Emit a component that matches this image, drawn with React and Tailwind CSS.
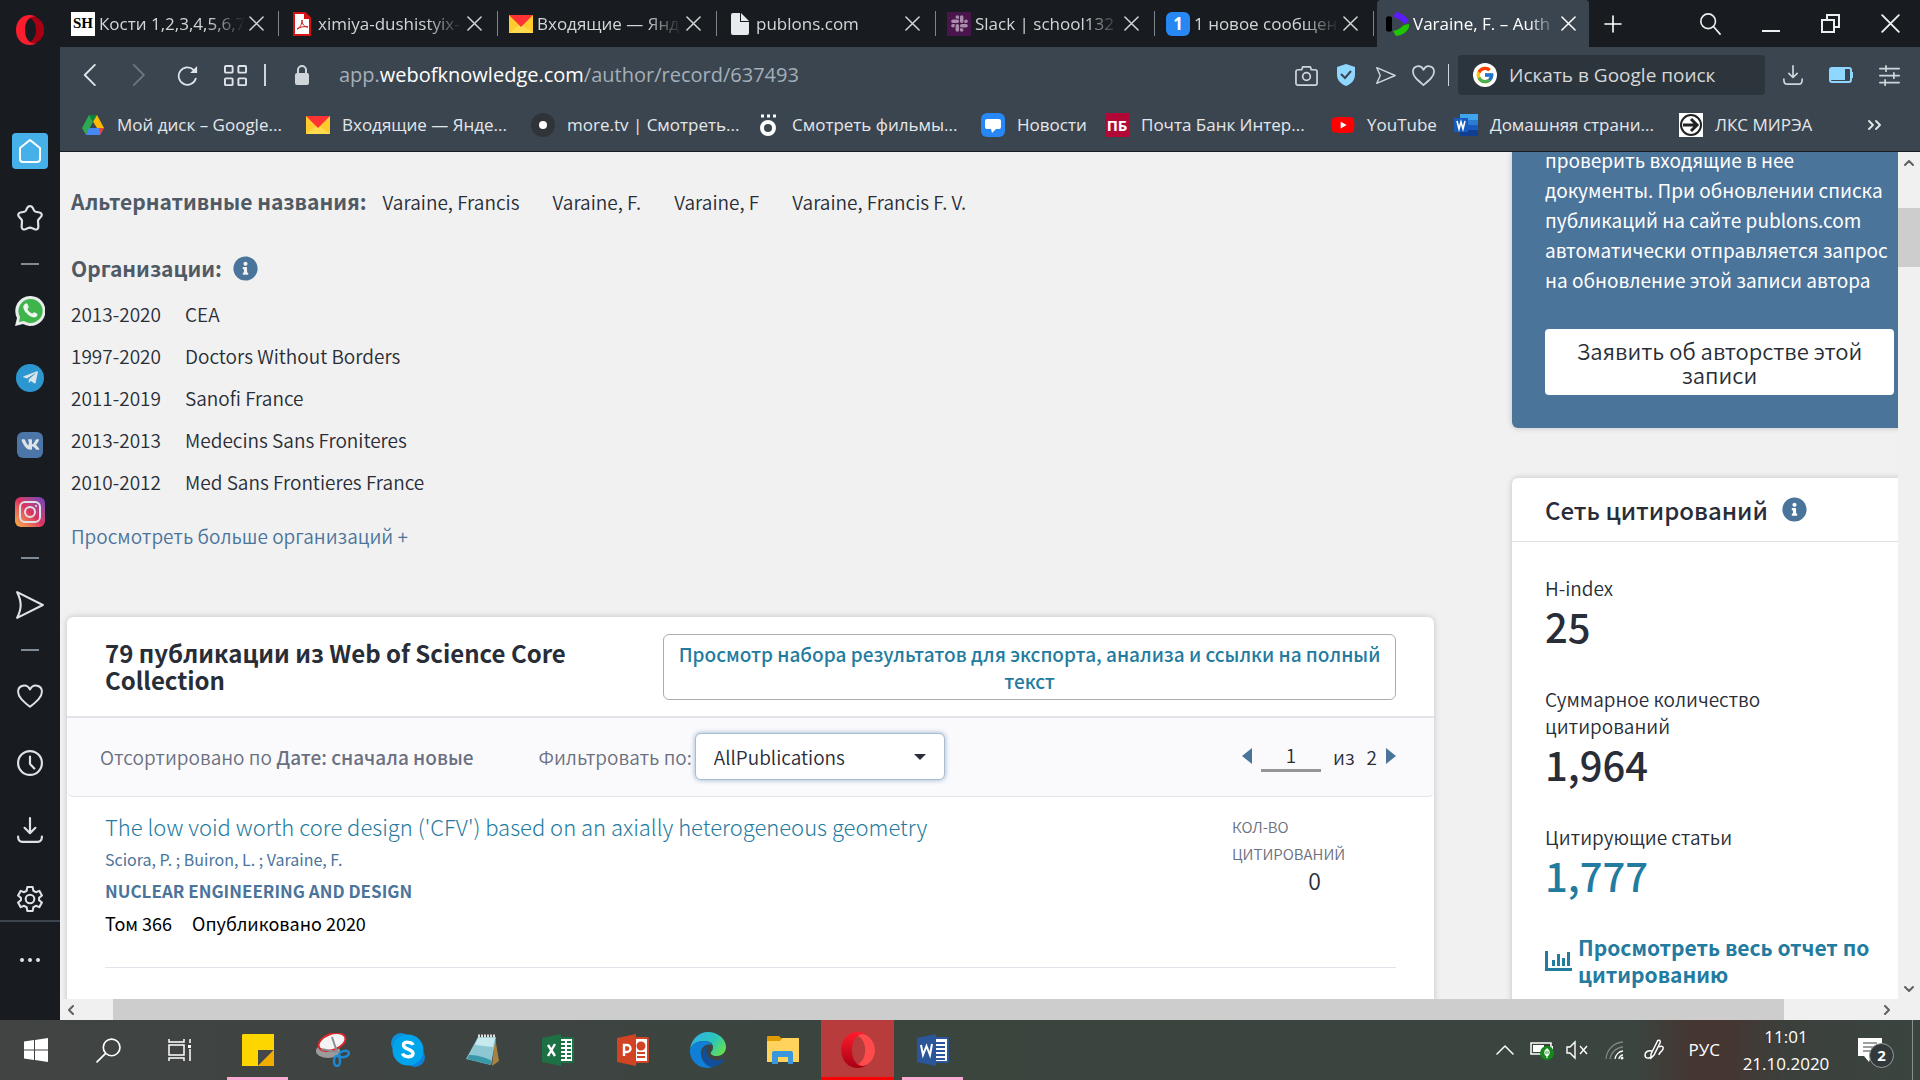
import {
  FaInfoCircle,
  FaSlack,
  FaTelegramPlane,
  FaVk,
  FaYoutube,
} from "react-icons/fa";
import { FcGoogle } from "react-icons/fc";

/* ---------- small drawings ---------- */

function Line({ size = 24, w = 2, color = "currentColor", vb = 24, children }) {
  return (
    <svg
      width={size}
      height={size}
      viewBox={`0 0 ${vb} ${vb}`}
      fill="none"
      stroke={color}
      strokeWidth={w}
      strokeLinecap="round"
      strokeLinejoin="round"
      className="shrink-0"
    >
      {children}
    </svg>
  );
}

function OperaLogo({ size, bright }) {
  return (
    <svg width={size} height={size} viewBox="0 0 30 30" className="shrink-0">
      <defs>
        <linearGradient id={bright ? "opA" : "opB"} x1="0" y1="0" x2="0" y2="1">
          <stop offset="0" stopColor="#ff1b2d" />
          <stop offset="1" stopColor={bright ? "#a70014" : "#fa1e2e"} />
        </linearGradient>
      </defs>
      <path
        fillRule="evenodd"
        fill={bright ? "#ff4b4b" : "#a70014"}
        d="M15 1c8 0 14 6 14 14s-6 14-14 14c-2 0-4-1-5-2 6 2 11-4 11-12S16 1 10 3c1-1 3-2 5-2z"
      />
      <path
        fillRule="evenodd"
        fill={`url(#${bright ? "opA" : "opB"})`}
        d="M15 0C7 0 1 6 1 15s6 15 14 15c3 0 5-1 7-2-7 2-12-4-12-13S15 0 22 2c-2-1-4-2-7-2z"
      />
      <path
        fill={bright ? "#ff4b4b" : "#a70014"}
        d="M17 2c7 0 12 6 12 13s-5 13-12 13c3-1 5-6 5-13S20 3 17 2z"
      />
    </svg>
  );
}

function EnvelopeIcon() {
  return (
    <svg width="24" height="18" viewBox="0 0 24 18" className="shrink-0">
      <path d="M0 0h24v18H0z" fill="#ffcb2d" />
      <path d="M0 18l12-9 12 9z" fill="#ffdb4d" />
      <path d="M0 0h24L12 12z" fill="#f33" />
    </svg>
  );
}

function ShIcon() {
  return (
    <span className="flex h-6 w-6 shrink-0 items-center justify-center bg-white font-['Liberation_Serif',serif] text-[15px] font-bold text-black">
      SH
    </span>
  );
}

function PdfIcon() {
  return (
    <svg width="18" height="24" viewBox="0 0 18 24" className="shrink-0">
      <path d="M1 1h11l5 5v17H1z" fill="#fff" stroke="#d41414" strokeWidth="2" />
      <path d="M11 0l7 7h-7z" fill="#d41414" />
      <path
        d="M4 17c3-1 5-5 5-9 0 4 2 7 6 7-4-1-8 0-11 2z"
        fill="none"
        stroke="#d41414"
      />
    </svg>
  );
}

function PageIcon() {
  return (
    <svg width="18" height="22" viewBox="0 0 18 22" className="shrink-0">
      <path d="M0 2a2 2 0 012-2h7v9h9v11a2 2 0 01-2 2H2a2 2 0 01-2-2z" fill="#e8ebee" />
      <path d="M10 0l8 8h-8z" fill="#e8ebee" />
    </svg>
  );
}

function ClarivateIcon() {
  return (
    <svg width="24" height="24" viewBox="0 0 24 24" className="shrink-0">
      <path d="M1 6c1-2 3-2 6-1v14c-3 1-5 1-6-1z" fill="#000" />
      <path d="M11 0c6 1 10 4 13 9l-5 3c-2-3-6-6-11-7z" fill="#5e1bff" />
      <path d="M11 24c7-1 11-4 13-9v-3l-5 1c-3 3-6 5-11 6z" fill="#1fc600" />
    </svg>
  );
}

function DriveIcon() {
  return (
    <svg width="22" height="20" viewBox="0 0 22 20" className="shrink-0">
      <path d="M7 0h8l7 13h-7z" fill="#ffba00" />
      <path d="M7 0l4 7-7 13-4-7z" fill="#2da94f" />
      <path d="M7 0h8l-4 7z" fill="#0b8043" />
      <path d="M7 13h15l-4 7H4z" fill="#4688f4" />
      <path d="M17 13h5l-4 7z" fill="#ea4335" />
    </svg>
  );
}

function WordTile() {
  return (
    <svg width="24" height="22" viewBox="0 0 24 22" className="shrink-0">
      <path d="M6 0h18v6H6z" fill="#41a5ee" />
      <path d="M6 6h18v5H6z" fill="#2b7cd3" />
      <path d="M6 11h18v5H6z" fill="#185abd" />
      <path d="M6 16h18v6H6z" fill="#103f91" />
      <path d="M0 4h14v14H0z" fill="#185abd" />
      <path d="M3 7l2 8 2-7 2 7 2-8" stroke="#fff" strokeWidth="1.6" fill="none" />
    </svg>
  );
}

/* ---------- left rail ---------- */

function RailItem({ label, children }) {
  return (
    <button aria-label={label} className="flex h-[67px] w-full items-center justify-center">
      {children}
    </button>
  );
}

function Dash({ className }) {
  return (
    <div className={`flex w-full items-center justify-center ${className}`}>
      <span className="h-[2px] w-[18px] bg-[#7f8b97]" />
    </div>
  );
}

function GearIcon() {
  return (
    <Line size={26} w={1.900}>
      <path d="M9.500 1h5l.6 3.400 2.300 1.300L20.600 4.500l2.400 4.200-2.600 2.200v2.200l2.600 2.200-2.400 4.200-3.200-1.200-2.300 1.300-.6 3.400h-5l-.6-3.400-2.300-1.300-3.200 1.200L1 15.300l2.600-2.200v-2.200L1 8.700l2.400-4.200 3.200 1.200 2.300-1.300z" />
      <circle cx="12" cy="12" r="4" />
    </Line>
  );
}

function Rail() {
  return (
    <aside className="flex w-[60px] shrink-0 flex-col items-center bg-[#181c20] text-[#dde3e6]">
      <button aria-label="Opera" className="mt-[15px] mb-[72px] h-[30px]">
        <OperaLogo size={30} />
      </button>
      <RailItem label="Home">
        <span className="flex h-9 w-9 items-center justify-center rounded bg-[#46b1e8] text-white">
          <Line>
            <path d="M12 1L2 9v11a3 3 0 003 3h14a3 3 0 003-3V9z" />
          </Line>
        </span>
      </RailItem>
      <RailItem label="Bookmarks">
        <Line size={26}>
          <path d="M12 1c1 0 2 .6 2.500 1.600l1.300 2.600c.3.600.8.900 1.400 1l3.600.7c2 .4 2.600 2.400 1.400 3.800l-2.300 2.700c-.4.500-.6 1-.5 1.700l.3 4.900c0 2-1.600 3-3.300 2.400l-3.400-1.300c-.6-.2-1.300-.2-2 0l-3.400 1.300c-1.700.6-3.300-.4-3.300-2.400l.3-4.900c.1-.7-.1-1.200-.5-1.700l-2.300-2.700C.6 9.300 1.200 7.300 3.200 6.900l3.600-.7c.6-.1 1.100-.4 1.400-1l1.300-2.600C10 1.600 11 1 12 1z" />
        </Line>
      </RailItem>
      <Dash className="h-[26px]" />
      <RailItem label="WhatsApp">
        <svg width="30" height="30" viewBox="0 0 30 30">
          <path d="M15 0a15 15 0 11-7 28L0 30l2-8A15 15 0 0115 0z" fill="#e8ecea" />
          <path d="M15 3a12 12 0 11-6 22l-5 1 1-5A12 12 0 0115 3z" fill="#3db54a" />
          <path
            d="M10 8c1-1 2-1 2.500 0l1.200 3c.2.700-1.400 1.800-1.200 2.300 1 2 2.500 3.400 4.500 4.300.6.200 1.500-1.700 2.200-1.400l3 1.500c.8.600-.2 2.900-1.400 3.400C16 23 7.500 15 8.300 10.600 8.500 9.400 9.300 8.600 10 8z"
            fill="#f2f4f3"
          />
        </svg>
      </RailItem>
      <RailItem label="Telegram">
        <span className="flex h-7 w-7 items-center justify-center rounded-full bg-[#2b96cf]">
          <FaTelegramPlane size={17} />
        </span>
      </RailItem>
      <RailItem label="VK">
        <span className="flex h-[26px] w-[26px] items-center justify-center rounded-md bg-[#4c75a8]">
          <FaVk size={19} />
        </span>
      </RailItem>
      <RailItem label="Instagram">
        <span className="flex h-[30px] w-[30px] items-center justify-center rounded-md bg-linear-to-tr from-[#f8b13c] via-[#dc3060] to-[#6a3bc0]">
          <Line size={24}>
            <rect x="2" y="2" width="20" height="20" rx="5" />
            <circle cx="12" cy="12" r="5" />
            <path d="M18 6h.01" />
          </Line>
        </span>
      </RailItem>
      <Dash className="h-[26px]" />
      <RailItem label="My Flow">
        <Line size={28} w={1.800}>
          <path d="M1 1l22 11L1 23c4-8 4-14 0-22z" />
        </Line>
      </RailItem>
      <Dash className="h-6" />
      <RailItem label="Personal news">
        <Line size={26} w={1.800}>
          <path d="M12 22C6 17 1 13 1 8c0-6 8-8 11-2 3-6 11-4 11 2 0 5-5 9-11 14z" />
        </Line>
      </RailItem>
      <RailItem label="History">
        <Line size={26}>
          <circle cx="12" cy="12" r="11" />
          <path d="M12 6v7l4 4" />
        </Line>
      </RailItem>
      <RailItem label="Downloads">
        <Line size={26}>
          <path d="M12 1v14M7 10l5 5 5-5M1 18c0 3 1 5 4 5h14c3 0 4-2 4-5" />
        </Line>
      </RailItem>
      <button aria-label="Settings" className="flex h-[57px] w-full items-end justify-center pb-2">
        <GearIcon />
      </button>
      <div className="flex w-full flex-1 flex-col items-center border-t-2 border-[#3c444d]">
        <button aria-label="More" className="flex h-[76px] items-center gap-1">
          <span className="h-1 w-1 rounded-full bg-[#dde3e6]" />
          <span className="h-1 w-1 rounded-full bg-[#dde3e6]" />
          <span className="h-1 w-1 rounded-full bg-[#dde3e6]" />
        </button>
      </div>
    </aside>
  );
}

/* ---------- browser chrome ---------- */

const tabs = [
  { icon: <ShIcon />, title: "Кости 1,2,3,4,5,6,7" },
  { icon: <PdfIcon />, title: "ximiya-dushistyix-" },
  { icon: <EnvelopeIcon />, title: "Входящие — Янд" },
  { icon: <PageIcon />, title: "publons.com" },
  {
    icon: (
      <span className="flex h-6 w-6 shrink-0 items-center justify-center bg-[#4a154b] text-[#a98bab]">
        <FaSlack size={19} />
      </span>
    ),
    title: "Slack | school132",
  },
  {
    icon: (
      <span className="flex h-6 w-6 shrink-0 items-center justify-center rounded-md bg-[#2787f5] text-[17px] font-bold text-white">
        1
      </span>
    ),
    title: "1 новое сообщен",
  },
];

function CloseX({ size = 15 }) {
  return (
    <Line size={size} vb={16} w={1.600}>
      <path d="M1 1l14 14M15 1L1 15" />
    </Line>
  );
}

function Tab({ icon, title }) {
  return (
    <div className="flex h-[47px] w-[219px] items-center text-[#d3d6d9]">
      <div className="flex min-w-0 flex-1 items-center gap-1 pl-[11px]">
        <span className="flex w-6 shrink-0 justify-center">{icon}</span>
        <span className="flex-1 whitespace-nowrap mask-r-from-75%">{title}</span>
        <button aria-label="Close tab" className="mr-[15px] shrink-0">
          <CloseX />
        </button>
      </div>
      <span className="h-[25px] w-px bg-[#7d868f]" />
    </div>
  );
}

function TabBar() {
  return (
    <div className="flex h-[47px] items-center bg-[#181c20] text-[17px]">
      {tabs.map((t) => (
        <Tab key={t.title} {...t} />
      ))}
      <div className="ml-[3px] flex h-[47px] w-[212px] items-center gap-1 rounded-t bg-[#3b4550] pl-2 text-white">
        <ClarivateIcon />
        <span className="flex-1 whitespace-nowrap mask-r-from-80%">Varaine, F. – Auth</span>
        <button aria-label="Close tab" className="mr-[13px] shrink-0">
          <CloseX />
        </button>
      </div>
      <button aria-label="New tab" className="ml-[15px] text-white">
        <Line size={18} vb={18} w={1.600}>
          <path d="M9 1v16M1 9h16" />
        </Line>
      </button>
      <div className="mr-5 ml-auto flex items-center gap-[41px] text-[#eceff1]">
        <button aria-label="Search tabs">
          <Line size={22} w={1.800}>
            <circle cx="10" cy="9" r="8" />
            <path d="M16 15l7 8" />
          </Line>
        </button>
        <button aria-label="Minimize" className="flex h-[17px] items-end">
          <span className="block h-[2px] w-[18px] bg-[#eceff1]" />
        </button>
        <button aria-label="Restore">
          <svg width="19" height="19" viewBox="0 0 19 19" fill="none" stroke="currentColor" strokeWidth="2">
            <path d="M1 6h12v12H1zM6 5V1h12v12h-4" />
          </svg>
        </button>
        <button aria-label="Close window">
          <CloseX size={19} />
        </button>
      </div>
    </div>
  );
}

function AddressBar() {
  return (
    <div className="flex h-[56px] items-center text-[#dfe4e8]">
      <button aria-label="Back" className="ml-[22px]">
        <Line size={22}>
          <path d="M14 1L3 12l11 11" />
        </Line>
      </button>
      <button aria-label="Forward" className="ml-[27px] text-[#6b7681]">
        <Line size={22}>
          <path d="M3 1l11 11L3 23" />
        </Line>
      </button>
      <button aria-label="Reload" className="ml-6">
        <Line size={21}>
          <path d="M21.500 15.500A10 10 0 1119 5.500" />
          <path d="M23 1v8h-8z" fill="currentColor" stroke="none" />
        </Line>
      </button>
      <button aria-label="Speed dial" className="ml-[26px]">
        <Line size={23}>
          <rect x="1" y="2" width="8" height="7" rx="1" />
          <rect x="15" y="2" width="8" height="7" rx="1" />
          <rect x="1" y="15" width="8" height="7" rx="1" />
          <rect x="15" y="15" width="8" height="7" rx="1" />
        </Line>
      </button>
      <span className="ml-[17px] h-[22px] w-[2px] bg-[#cfd5da]" />
      <svg width="14" height="20" viewBox="0 0 14 20" className="ml-[29px]">
        <path d="M3 9V5a4 4 0 018 0v4" fill="none" stroke="#cfd5d8" strokeWidth="2" />
        <rect y="8" width="14" height="12" rx="2" fill="#cfd5d8" />
      </svg>
      <span className="ml-[30px] text-[20px] text-[#a4afb9]">
        app.<span className="text-white">webofknowledge.com</span>/author/record/637493
      </span>
      <div className="ml-auto flex items-center text-[#cfd5d9]">
        <button aria-label="Snapshot">
          <Line size={23} w={1.800}>
            <path d="M8 3h8l1 3h4a2 2 0 012 2v12a2 2 0 01-2 2H3a2 2 0 01-2-2V8a2 2 0 012-2h4z" />
            <circle cx="12" cy="13" r="4" />
          </Line>
        </button>
        <button aria-label="Ad blocker" className="ml-[19px]">
          <svg width="18" height="22" viewBox="0 0 18 22">
            <path d="M9 0l9 3v8c0 5-4 9-9 11-5-2-9-6-9-11V3z" fill="#8fd7ff" />
            <path d="M4 10l4 4 6-7" fill="none" stroke="#3b4550" strokeWidth="2" />
          </svg>
        </button>
        <button aria-label="Send to My Flow" className="ml-5">
          <Line size={21} w={1.600}>
            <path d="M2 3l21 9L2 21l4-9z" />
          </Line>
        </button>
        <button aria-label="Add to bookmarks" className="ml-4">
          <Line size={23} w={1.800}>
            <path d="M12 22C6 17 1 13 1 8c0-6 8-8 11-2 3-6 11-4 11 2 0 5-5 9-11 14z" />
          </Line>
        </button>
        <span className="ml-[13px] h-[22px] w-px bg-[#cfd5da]" />
        <label className="ml-[9px] flex h-10 w-[307px] items-center gap-3 rounded-sm bg-[#2d353c] pl-[15px]">
          <span className="flex h-6 w-6 items-center justify-center rounded-full bg-white">
            <FcGoogle size={20} />
          </span>
          <input
            aria-label="Search"
            placeholder="Искать в Google поиск"
            className="w-[240px] bg-transparent text-[19px] outline-none placeholder:text-[#d5d8da]"
          />
        </label>
        <button aria-label="Downloads" className="ml-[18px]">
          <Line size={20}>
            <path d="M12 1v14M7 10l5 5 5-5M1 17c0 4 1 6 4 6h14c3 0 4-2 4-6" />
          </Line>
        </button>
        <button aria-label="Battery saver" className="ml-[26px]">
          <svg width="24" height="16" viewBox="0 0 24 16">
            <rect x="1" y="1" width="21" height="14" rx="2" fill="none" stroke="#8fd7ff" strokeWidth="2" />
            <path d="M2 2h14v11H2zM22 5h2v6h-2z" fill="#8fd7ff" />
          </svg>
        </button>
        <button aria-label="Easy setup" className="mr-5 ml-[26px]">
          <Line size={21}>
            <path d="M1 4h22M1 12h22M1 20h22M8 1v6M17 9v6M7 17v6" />
          </Line>
        </button>
      </div>
    </div>
  );
}

const bookmarks = [
  { w: "w-[225px]", icon: <DriveIcon />, title: "Мой диск – Google..." },
  { w: "w-[225px]", icon: <EnvelopeIcon />, title: "Входящие — Янде..." },
  {
    w: "w-[225px]",
    icon: (
      <span className="flex h-6 w-6 items-center justify-center rounded-full bg-[#303439]">
        <span className="h-2 w-2 rounded-full bg-white" />
      </span>
    ),
    title: "more.tv | Смотреть...",
  },
  {
    w: "w-[225px]",
    icon: (
      <svg width="18" height="24" viewBox="0 0 18 24">
        <circle cx="9" cy="15" r="6" fill="none" stroke="#fff" strokeWidth="4" />
        <path d="M2 3h3M8 3h3M14 3h3" stroke="#fff" strokeWidth="3" />
      </svg>
    ),
    title: "Смотреть фильмы...",
  },
  {
    w: "w-[124px]",
    icon: (
      <svg width="24" height="24" viewBox="0 0 24 24">
        <rect width="24" height="24" rx="6" fill="#2787f5" />
        <path d="M6 6h12a2 2 0 012 2v6a2 2 0 01-2 2h-3l-4 4-1-4H6a2 2 0 01-2-2V8a2 2 0 012-2z" fill="#fff" />
      </svg>
    ),
    title: "Новости",
  },
  {
    w: "w-[226px]",
    icon: (
      <span className="flex h-6 w-6 items-center justify-center bg-[#b20838] text-[15px] font-bold text-white">
        ПБ
      </span>
    ),
    title: "Почта Банк Интер...",
  },
  {
    w: "w-[123px]",
    icon: (
      <FaYoutube
        size={24}
        color="#f00"
        className="bg-[linear-gradient(white,white)] bg-[length:10px_8px] bg-center bg-no-repeat"
      />
    ),
    title: "YouTube",
  },
  { w: "w-[225px]", icon: <WordTile />, title: "Домашняя страни..." },
  {
    w: "w-[180px]",
    icon: (
      <svg width="24" height="24" viewBox="0 0 24 24">
        <path d="M0 0h24v24H0z" fill="#fff" />
        <circle cx="12" cy="12" r="10" fill="none" stroke="#222" strokeWidth="2" />
        <path d="M4 12h13M12 6l6 6-6 6" fill="none" stroke="#222" strokeWidth="3" />
      </svg>
    ),
    title: "ЛКС МИРЭА",
  },
];

function Bookmarks() {
  return (
    <div className="flex h-[49px] items-center border-b border-[#181c20] pb-1 pl-[21px] text-[17px] text-[#e4e7ea]">
      {bookmarks.map((b) => (
        <a key={b.title} href="#" className={`flex items-center gap-3 whitespace-nowrap ${b.w}`}>
          <span className="flex w-6 shrink-0 justify-center">{b.icon}</span>
          {b.title}
        </a>
      ))}
      <button aria-label="More bookmarks" className="mr-[38px] ml-auto">
        <Line size={14} vb={14} w={1.800}>
          <path d="M1 3l4 4-4 4M8 3l4 4-4 4" />
        </Line>
      </button>
    </div>
  );
}

/* ---------- page ---------- */

const names = ["Varaine, Francis", "Varaine, F.", "Varaine, F", "Varaine, Francis F. V."];

const organizations = [
  ["2013-2020", "CEA"],
  ["1997-2020", "Doctors Without Borders"],
  ["2011-2019", "Sanofi France"],
  ["2013-2013", "Medecins Sans Froniteres"],
  ["2010-2012", "Med Sans Frontieres France"],
];

function Profile() {
  return (
    <section className="px-1">
      <div className="flex h-[30px] items-center">
        <h2 className="mr-4 text-[21px] font-bold text-[#505a66]">Альтернативные названия:</h2>
        <ul className="flex gap-[33px]">
          {names.map((n) => (
            <li key={n}>{n}</li>
          ))}
        </ul>
      </div>
      <div className="mt-[37px] flex h-[30px] items-center gap-[11px]">
        <h2 className="text-[21px] font-bold text-[#505a66]">Организации:</h2>
        <button aria-label="Информация">
          <FaInfoCircle size={25} color="#4b749b" />
        </button>
      </div>
      <table className="mt-[9px]">
        <tbody>
          {organizations.map(([years, org]) => (
            <tr key={org} className="h-[42px]">
              <td className="w-[114px]">{years}</td>
              <td>{org}</td>
            </tr>
          ))}
        </tbody>
      </table>
      <a href="#" className="mt-5 block text-[#4b749b]">
        Просмотреть больше организаций +
      </a>
    </section>
  );
}

function Publications() {
  return (
    <section className="mt-[68px] rounded-md bg-white shadow-[0_0_6px_rgba(0,0,0,0.2)]">
      <div className="flex items-start justify-between border-b-2 border-[#e3e3ec] pt-[17px] pr-[38px] pb-4 pl-[38px]">
        <h1 className="mt-[5px] w-[500px] text-[24px] leading-[27px] font-bold">
          79 публикации из Web of Science Core Collection
        </h1>
        <button className="h-[66px] w-[733px] rounded-md border border-[#a9adb3] px-2 pb-px leading-[27px] font-medium text-[#247ba0]">
          Просмотр набора результатов для экспорта, анализа и ссылки на полный текст
        </button>
      </div>
      <div className="flex h-[79px] items-center rounded-b-md border-b border-[#e3e3ec] bg-[#fafafd] pr-[38px] pb-[2px] pl-[33px] text-[#6b7080]">
        <p>
          Отсортировано по <b className="font-medium">Дате: сначала новые</b>
        </p>
        <label htmlFor="filter" className="ml-[65px]">
          Фильтровать по:
        </label>
        <div className="relative ml-[3px]">
          <select
            id="filter"
            className="h-[47px] w-[250px] appearance-none rounded-md border border-[#a9bdd2] bg-white px-[18px] text-[#282d37] shadow-[0_0_4px_1px_#b4c6d9] outline-none"
          >
            <option>AllPublications</option>
          </select>
          <svg width="12" height="6" viewBox="0 0 12 6" className="pointer-events-none absolute top-[21px] right-[19px]">
            <path d="M0 0h12L6 6z" fill="#282d37" />
          </svg>
        </div>
        <div className="ml-auto flex items-center text-[#282d37]">
          <button aria-label="Предыдущая">
            <svg width="10" height="16" viewBox="0 0 10 16">
              <path d="M10 0v16L0 8z" fill="#4b749b" />
            </svg>
          </button>
          <input
            aria-label="Страница"
            defaultValue="1"
            className="ml-[9px] h-8 w-[60px] border-b-[3px] border-[#959595] text-center outline-none"
          />
          <span className="ml-3">из</span>
          <span className="ml-3">2</span>
          <button aria-label="Следующая" className="ml-[9px]">
            <svg width="10" height="16" viewBox="0 0 10 16">
              <path d="M0 0v16l10-8z" fill="#4b749b" />
            </svg>
          </button>
        </div>
      </div>
      <article className="mx-[38px] flex h-[171px] justify-between border-b border-[#e3e3ec] pt-[11px]">
        <div>
          <h3 className="text-[22px] leading-9 font-light">
            <a href="#" className="text-[#247ba0]">
              The low void worth core design ('CFV') based on an axially heterogeneous geometry
            </a>
          </h3>
          <p className="text-[16px] leading-[30px] font-normal text-[#4b749b]">Sciora, P. ; Buiron, L. ; Varaine, F.</p>
          <p className="text-[17px] leading-[34px] font-bold text-[#4b749b]">NUCLEAR ENGINEERING AND DESIGN</p>
          <p className="flex gap-5 text-[18px] leading-[30px] font-normal text-black">
            <span>Том 366</span>
            <span>Опубликовано 2020</span>
          </p>
        </div>
        <div className="mr-[51px] w-[113px] pt-[5px] text-[15px] leading-[27px] text-[#6b7080]">
          КОЛ-ВО ЦИТИРОВАНИЙ
          <p className="pr-6 text-right text-[23px] text-[#282d37]">0</p>
        </div>
      </article>
      <div className="h-[200px]" />
    </section>
  );
}

function Metric({ label, value, link }) {
  return (
    <div className="mb-[34px]">
      <p className="w-[250px] leading-[27px]">{label}</p>
      <p className="text-[40px] leading-[50px] font-medium">
        {link ? (
          <a href="#" className="text-[#247ba0]">
            {value}
          </a>
        ) : (
          value
        )}
      </p>
    </div>
  );
}

function SideColumn() {
  return (
    <div className="flex w-[386px] shrink-0 flex-col gap-[50px]">
      <section className="w-[416px] rounded-b-md bg-[#4b749b] pt-px pr-[34px] pb-[33px] pl-[33px] text-white shadow-[0_0_6px_rgba(0,0,0,0.2)]">
        <p className="-mt-2 leading-[30px] font-normal">
          проверить входящие в нее
          <br />
          документы. При обновлении списка
          <br />
          публикаций на сайте publons.com
          <br />
          автоматически отправляется запрос
          <br />
          на обновление этой записи автора
        </p>
        <button className="mt-[34px] h-[66px] w-full rounded bg-white px-6 text-[22px] leading-6 text-[#282d37]">
          Заявить об авторстве этой записи
        </button>
      </section>
      <section className="h-[700px] w-[416px] shrink-0 rounded-md bg-white shadow-[0_0_6px_rgba(0,0,0,0.2)]">
        <div className="flex h-16 items-center gap-[14px] border-b border-[#e0e0e4] pl-[33px]">
          <h2 className="text-[24px] font-medium">Сеть цитирований</h2>
          <button aria-label="Информация">
            <FaInfoCircle size={25} color="#4b749b" />
          </button>
        </div>
        <div className="pt-8 pl-[33px]">
          <Metric label="H-index" value="25" />
          <Metric label="Суммарное количество цитирований" value="1,964" />
          <Metric label="Цитирующие статьи" value="1,777" link />
          <a href="#" className="flex items-center gap-[6px] text-[21px] leading-[27px] font-bold text-[#247ba0]">
            <svg width="27" height="20" viewBox="0 0 27 20" fill="currentColor" className="shrink-0">
              <path d="M0 0h3v17h24v3H0zM7 9h3v6H7zM12 3h3v12h-3zM17 7h3v8h-3zM22 1h3v14h-3z" />
            </svg>
            <span className="w-[300px]">Просмотреть весь отчет по цитированию</span>
          </a>
        </div>
      </section>
    </div>
  );
}

function Chevron({ d }) {
  return (
    <Line size={10} vb={10} w={2} color="#606060">
      <path d={d} />
    </Line>
  );
}

function Page() {
  return (
    <div className="flex min-h-0 flex-1 flex-col bg-[#f0f0f0]">
      <div className="flex min-h-0 flex-1">
        <main className="flex min-w-0 flex-1 justify-between overflow-hidden bg-[#f1f1f1] font-['Noto_Sans_CJK_SC',sans-serif] text-[19px] leading-[27px] font-[350] text-[#282d37]">
          <div className="ml-[7px] w-[1367px] pt-[34px]">
            <Profile />
            <Publications />
          </div>
          <SideColumn />
        </main>
        <div className="flex w-[22px] shrink-0 flex-col items-center bg-[#f0f0f0]">
          <div className="flex h-[56px] items-start pt-[6px]">
            <Chevron d="M1 7l4-4 4 4" />
          </div>
          <div className="h-[59px] w-full bg-[#cdcdcd]" />
          <div className="mt-auto pb-[5px]">
            <Chevron d="M1 3l4 4 4-4" />
          </div>
        </div>
      </div>
      <div className="flex h-[21px] items-center">
        <div className="w-[53px] pl-[6px]">
          <Chevron d="M7 1L3 5l4 4" />
        </div>
        <div className="h-full flex-1 bg-[#cdcdcd]" />
        <div className="flex w-[136px] justify-end pr-7">
          <Chevron d="M3 1l4 4-4 4" />
        </div>
      </div>
    </div>
  );
}

/* ---------- taskbar ---------- */

function OfficeIcon({ color, kind }) {
  return (
    <svg width="32" height="32" viewBox="0 0 32 32">
      <rect x="15" y="4" width="16" height="24" rx="1" fill="#fff" stroke={color} strokeWidth="2" />
      {kind === "X" && (
        <path d="M19 8h4M25 8h4M19 12h4M25 12h4M19 16h4M25 16h4M19 20h4M25 20h4M19 24h4M25 24h4" stroke={color} strokeWidth="2" />
      )}
      {kind === "P" && (
        <g fill="none" stroke={color} strokeWidth="2">
          <circle cx="24" cy="12" r="3.500" fill={color} />
          <path d="M20 19h8M20 23h8" />
        </g>
      )}
      {kind === "W" && <path d="M19 9h9M19 13h9M19 17h9M19 21h9M19 25h9" stroke={color} strokeWidth="2" />}
      <path d="M0 4l19-4v32L0 28z" fill={color} />
      <g fill="none" stroke="#fff" strokeWidth="2.400">
        {kind === "X" && <path d="M6 11l7 11M13 10L6 22" />}
        {kind === "P" && <path d="M7 22V11h3a3 3 0 010 7H7" />}
        {kind === "W" && <path d="M4 11l2 10 3.500-9 3.500 9 2-11" strokeWidth="2" />}
      </g>
    </svg>
  );
}

const apps = [
  {
    label: "Sticky Notes",
    open: true,
    icon: (
      <svg width="32" height="32" viewBox="0 0 32 32">
        <path d="M1 0h31v32H0V1z" fill="#fdd600" />
        <path d="M16 16h16L16 32z" fill="#45484a" />
        <path d="M32 16v16H16z" fill="#f2ae00" />
      </svg>
    ),
  },
  {
    label: "Snipping Tool",
    icon: (
      <svg width="34" height="34" viewBox="0 0 34 34">
        <ellipse cx="12" cy="18" rx="12" ry="7" fill="#9b9b9b" />
        <ellipse cx="16" cy="9" rx="14" ry="8" transform="rotate(-20 16 9)" fill="#f4f4f4" stroke="#d8262c" strokeWidth="2" />
        <path d="M16 4l5 15M5 16l16 3" stroke="#8a8f94" strokeWidth="2" />
        <g fill="none" stroke="#1e88d2" strokeWidth="2.500">
          <ellipse cx="28" cy="21" rx="5" ry="3" transform="rotate(-15 28 21)" />
          <ellipse cx="21" cy="28" rx="3" ry="5" />
        </g>
      </svg>
    ),
  },
  {
    label: "Skype",
    icon: (
      <svg width="34" height="34" viewBox="0 0 34 34">
        <circle cx="10" cy="10" r="10" fill="#0b92dd" />
        <circle cx="24" cy="24" r="10" fill="#0a82da" />
        <circle cx="17" cy="17" r="15.500" fill="#00a5ec" />
        <path d="M22 12c-1-3-9-4-9.500 0-.5 4.500 9.500 3.500 9.500 8.500 0 4.500-9 4-10.500 0" fill="none" stroke="#fff" strokeWidth="3.500" />
      </svg>
    ),
  },
  {
    label: "Notepad",
    icon: (
      <svg width="34" height="32" viewBox="0 0 34 32">
        <path d="M29 3l4 24-7 5z" fill="#a8813f" />
        <path d="M12 3h18l-5 28L0 25z" fill="#8cc7d2" />
        <path d="M12 4h17l-2 9-18-2z" fill="#c8e9ee" />
        <path d="M1 25l24 6 1-4C17 22 9 21 3 21z" fill="#3b98a8" />
        <path d="M12 2h18" stroke="#dedede" strokeWidth="3" strokeDasharray="2 1" />
      </svg>
    ),
  },
  { label: "Excel", icon: <OfficeIcon color="#1e7145" kind="X" /> },
  { label: "PowerPoint", icon: <OfficeIcon color="#d04423" kind="P" /> },
  {
    label: "Edge",
    icon: (
      <svg width="36" height="36" viewBox="0 0 36 36">
        <defs>
          <linearGradient id="edgeTop" x1="0" x2="1" y1="0.200" y2="0.700">
            <stop offset="0" stopColor="#2fb0e8" />
            <stop offset="0.600" stopColor="#2cc7b8" />
            <stop offset="1" stopColor="#66e04e" />
          </linearGradient>
        </defs>
        <path d="M0 18C1 7 9 0 18 0c10 0 18 7 18 15 0 6-5 9-9 9-5 0-7-2-6-4 1-1 2-2 2-5 0-4-4-6-9-6C7 9 2 12 0 18z" fill="url(#edgeTop)" />
        <path d="M0 18c2-6 7-9 14-9 4 0 7 2 8 4-7-2-11 3-11 8 0 7 5 13 12 14-13 4-24-6-23-17z" fill="#0f7fd8" />
        <path d="M17 14c-7 4-7 20 6 21 5-1 9-4 11-7 1-1 0-2-1-1-8 4-19 0-16-13z" fill="#114f9c" />
      </svg>
    ),
  },
  {
    label: "Explorer",
    icon: (
      <svg width="32" height="32" viewBox="0 0 32 32">
        <path d="M0 3a1 1 0 011-1h11l3 3-2 3H0z" fill="#e09b00" />
        <path d="M0 7h13l2-3h17v24H0z" fill="#ffd35c" />
        <path d="M5 30V19a2 2 0 012-2h17a2 2 0 012 2v11h-5v-7H11v7z" fill="#3a96dd" />
      </svg>
    ),
  },
  { label: "Opera", active: true, icon: <OperaLogo size={36} bright /> },
  { label: "Word", open: true, icon: <OfficeIcon color="#2b579a" kind="W" /> },
];

function AppButton({ label, icon, open, active }) {
  return (
    <button
      aria-label={label}
      className={`flex h-[60px] w-[75px] items-center justify-center border-x border-transparent bg-clip-padding ${active ? "bg-[#b83c3c]" : ""}`}
    >
      <span
        className={`flex h-[60px] items-center justify-center border-b-[3px] pt-[3px] ${
          active ? "w-full border-[#f00]" : open ? "w-[61px] border-[#f9abd3]" : "w-[61px] border-transparent"
        }`}
      >
        {icon}
      </span>
    </button>
  );
}

function Taskbar() {
  return (
    <footer className="flex h-[60px] shrink-0 items-center bg-[linear-gradient(90deg,#414442_0%,#3d4441_30%,#3a453e_45%,#3a4540_85%,#453632_88%,#453632_90%,#3c403c_93%,#3a453f_100%)] text-white">
      <button aria-label="Start" className="flex w-[72px] justify-center">
        <svg width="24" height="24" viewBox="0 0 24 24" fill="#fff">
          <path d="M0 3.500L10 2v9.500H0zM11 2l13-2v11.500H11zM0 12.500h10V22L0 20.500zM11 12.500h13V24l-13-2z" />
        </svg>
      </button>
      <button aria-label="Search" className="flex w-[72px] justify-center">
        <Line size={25} w={1.600}>
          <circle cx="15" cy="9" r="8" />
          <path d="M9 15l-8 8" />
        </Line>
      </button>
      <button aria-label="Task view" className="flex w-[76px] justify-center pr-1">
        <svg width="24" height="24" viewBox="0 0 24 24" fill="none" stroke="#fff" strokeWidth="1.500">
          <path d="M1 1v3h15V1M1 7h15v10H1zM1 23v-3h15v3M22 1v4M22 11v12" />
          <path d="M20 7h3v3h-3z" fill="#fff" stroke="none" />
        </svg>
      </button>
      {apps.map((a) => (
        <AppButton key={a.label} {...a} />
      ))}
      <div className="ml-auto flex h-full items-center">
        <button aria-label="Hidden icons">
          <Line size={18} vb={18} w={1.500}>
            <path d="M1 13l8-8 8 8" />
          </Line>
        </button>
        <svg width="24" height="20" viewBox="0 0 24 20" className="ml-4">
          <path d="M1 3h20v11H1z" fill="none" stroke="#fff" strokeWidth="1.500" />
          <path d="M3 5h11v7H3zM22 6h1v5h-1z" fill="#fff" />
          <circle cx="17" cy="13" r="7" fill="#13891b" />
          <path d="M17 9c3 2 3 5 0 7-3-2-3-5 0-7v9" fill="none" stroke="#fff" strokeWidth="1.200" />
        </svg>
        <svg width="22" height="20" viewBox="0 0 22 20" fill="none" stroke="#fff" strokeWidth="1.400" className="ml-3">
          <path d="M1 7v6h3l5 5V2L4 7zM14 6l7 8M21 6l-7 8" />
        </svg>
        <svg width="20" height="20" viewBox="0 0 20 20" fill="none" className="ml-[17px]">
          <path d="M1 19A18 18 0 0118 2M5 19A14 14 0 0118 7" stroke="#7d8481" strokeWidth="1.300" />
          <path d="M10 19a9 9 0 018-8M14 19c0-2 2-4 4-4" stroke="#fff" strokeWidth="1.300" />
          <circle cx="17" cy="18" r="1.500" fill="#fff" />
        </svg>
        <svg width="22" height="22" viewBox="0 0 22 22" fill="none" stroke="#fff" strokeWidth="1.500" className="ml-[18px]">
          <path d="M8 15l6-12c1-3 4-2 3 1l-6 12-3 3zM9 12c-4-1-7 1-7 4 0 4 5 4 7 1M16 8c3-2 5 0 4 2-1 3-4 3-4 6" />
        </svg>
        <span className="ml-6 text-[17px]">РУС</span>
        <div className="ml-[19px] w-[94px] text-center text-[17px] leading-[27px]">
          <p>11:01</p>
          <p>21.10.2020</p>
        </div>
        <button aria-label="Notifications" className="relative mr-[18px] ml-[25px] h-9 w-9">
          <svg width="24" height="24" viewBox="0 0 24 24">
            <path d="M0 0h24v18H13l-2 6-5-6H0z" fill="#fff" />
            <path d="M5 5h14M5 9h14M5 13h9" stroke="#3a4540" strokeWidth="1.200" />
          </svg>
          <span className="absolute top-[11px] left-[11px] flex h-[25px] w-[25px] items-center justify-center rounded-full border border-[#9a9a9a] bg-[#33393a] text-[15px] font-bold">
            2
          </span>
        </button>
        <span className="mr-[7px] h-full w-px bg-[#8a908d]" />
      </div>
    </footer>
  );
}

export default function App() {
  return (
    <div className="flex h-screen flex-col overflow-hidden font-['Open_Sans',sans-serif]">
      <div className="flex min-h-0 flex-1">
        <Rail />
        <div className="flex min-w-0 flex-1 flex-col">
          <TabBar />
          <div className="bg-[#3b4550]">
            <AddressBar />
            <Bookmarks />
          </div>
          <Page />
        </div>
      </div>
      <Taskbar />
    </div>
  );
}
